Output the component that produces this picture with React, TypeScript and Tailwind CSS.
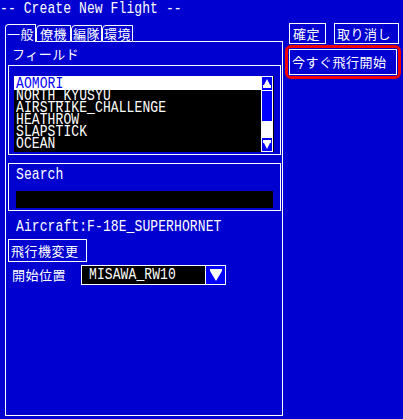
import React from "react";

const jp = "font-['Noto_Sans_CJK_JP',sans-serif] text-[13px] tracking-[0.5px] whitespace-nowrap";

function A({ children, className = "" }: { children: React.ReactNode; className?: string }) {
  return (
    <span className={`inline-block scale-y-[1.25] tracking-[0.1px] whitespace-pre ${className}`}>{children}</span>
  );
}

function UpIcon() {
  return (
    <svg width="8" height="9" viewBox="0 0 8 9">
      <path d="M4 0 L7 6 L8 6 L8 9 L0 9 L0 6 L1 6 Z" fill="#fff" />
    </svg>
  );
}

function DownIcon() {
  return (
    <svg width="8" height="9" viewBox="0 0 8 9">
      <path d="M0 0 L8 0 L8 3 L7 3 L4 9 L1 3 L0 3 Z" fill="#fff" />
    </svg>
  );
}

export default function App() {
  const items = ["NORTH_KYUSYU", "AIRSTRIKE_CHALLENGE", "HEATHROW", "SLAPSTICK", "OCEAN"];
  return (
    <div className="w-[403px] h-[419px] bg-[#0000d0] text-white overflow-hidden font-['Liberation_Mono','Noto_Sans_CJK_JP',monospace] text-[13px]">
      <div className="h-[23px] pt-[1px] leading-[16px]">
        <A>-- Create New Flight --</A>
      </div>
      <div className="flex">
        {/* left column */}
        <div className="ml-[5px] w-[278px] pt-[1px] flex flex-col">
          <div className="flex h-[18px] items-end">
            <div className={`${jp} w-[31px] h-[18px] border-l border-t border-r border-white rounded-tl-[4px] pl-[1px] leading-[17px]`}>
              一般
            </div>
            <div className={`${jp} w-[35px] h-[17px] border border-white rounded-tl-[4px] pl-[3px] leading-[15px]`}>
              僚機
            </div>
            <div className={`${jp} w-[31px] h-[17px] border border-white rounded-tl-[4px] pl-[1px] leading-[15px]`}>
              編隊
            </div>
            <div className={`${jp} w-[31px] h-[17px] border border-white rounded-tl-[4px] pl-[1px] leading-[15px]`}>
              環境
            </div>
            <div className="flex-1 h-full border-b border-white" />
          </div>
          <div className="h-[374px] border-l border-r border-b border-white flex flex-col">
            <div className={`${jp} mt-[4px] h-[16px] leading-[16px] pl-[6px]`}>フィールド</div>
            {/* list frame */}
            <div className="mt-[3px] ml-[2px] w-[273px] h-[90px] border border-white pt-[10px] pl-[5px] pr-[6px] pb-[2px]">
              <div className="flex h-[76px] bg-black">
                <div className="w-[247px] flex flex-col">
                  <div className="h-[12px] leading-[16px] bg-white shadow-[0_2px_0_#fff] text-[#0000ff] pl-[2px] relative z-10">
                    <A>AOMORI</A>
                  </div>
                  {items.map((it) => (
                    <div key={it} className="h-[12px] leading-[16px] pl-[2px]">
                      <A>{it}</A>
                    </div>
                  ))}
                </div>
                <div className="w-[12px] h-[76px] border border-white bg-white flex flex-col">
                  <div className="h-[14px] border-b border-white bg-[#0000ff] flex items-center justify-center">
                    <UpIcon />
                  </div>
                  <div className="h-[30px] bg-[#0000ff]" />
                  <div className="flex-1 bg-white" />
                  <div className="h-[13px] bg-[#0000ff] flex items-center justify-center">
                    <DownIcon />
                  </div>
                </div>
              </div>
            </div>
            {/* search frame */}
            <div className="mt-[8px] ml-[2px] w-[273px] h-[48px] border border-white pt-[3px] px-[7px] pb-[2px]">
              <div className="h-[16px] leading-[16px]">
                <A>Search</A>
              </div>
              <div className="mt-[8px] h-[17px] bg-black" />
            </div>
            <div className="pt-[8px] h-[24px] leading-[16px] pl-[10px]">
              <A>Aircraft:F-18E_SUPERHORNET</A>
            </div>
            <div className={`${jp} mt-[4px] ml-[2px] w-[79px] h-[23px] border border-white pl-[2px] leading-[21px]`}>
              飛行機変更
            </div>
            <div className="mt-[3px] flex items-center h-[20px] pl-[6px]">
              <span className={`${jp} w-[69px] leading-[20px]`}>開始位置</span>
              <div className="w-[145px] h-[20px] border border-white flex">
                <div className="w-[123px] h-full bg-black pl-[7px] leading-[18px]">
                  <A>MISAWA_RW10</A>
                </div>
                <div className="flex-1 h-full border-l border-white bg-[#0000ff] flex items-center justify-center">
                  <svg width="12" height="12" viewBox="0 0 12 12">
                    <path d="M0 0 H12 V2 L6 12 L0 2 Z" fill="#fff" />
                  </svg>
                </div>
              </div>
            </div>
          </div>
        </div>
        {/* right column */}
        <div className="ml-[2px] w-[116px] flex flex-col">
          <div className="flex pl-[4px] h-[21px] gap-[8px]">
            <div className={`${jp} w-[37px] h-[21px] border border-white pl-[3px] leading-[19px]`}>確定</div>
            <div className={`${jp} w-[65px] h-[21px] border border-white pl-[2px] leading-[19px]`}>取り消し</div>
          </div>
          <div className="mt-[1px] w-[116px] h-[34px] border-[3px] border-[#f00000] rounded-[6px] p-[1px]">
            <div className={`${jp} h-full border border-white pl-[2px] leading-[24px]`}>今すぐ飛行開始</div>
          </div>
        </div>
      </div>
    </div>
  );
}
